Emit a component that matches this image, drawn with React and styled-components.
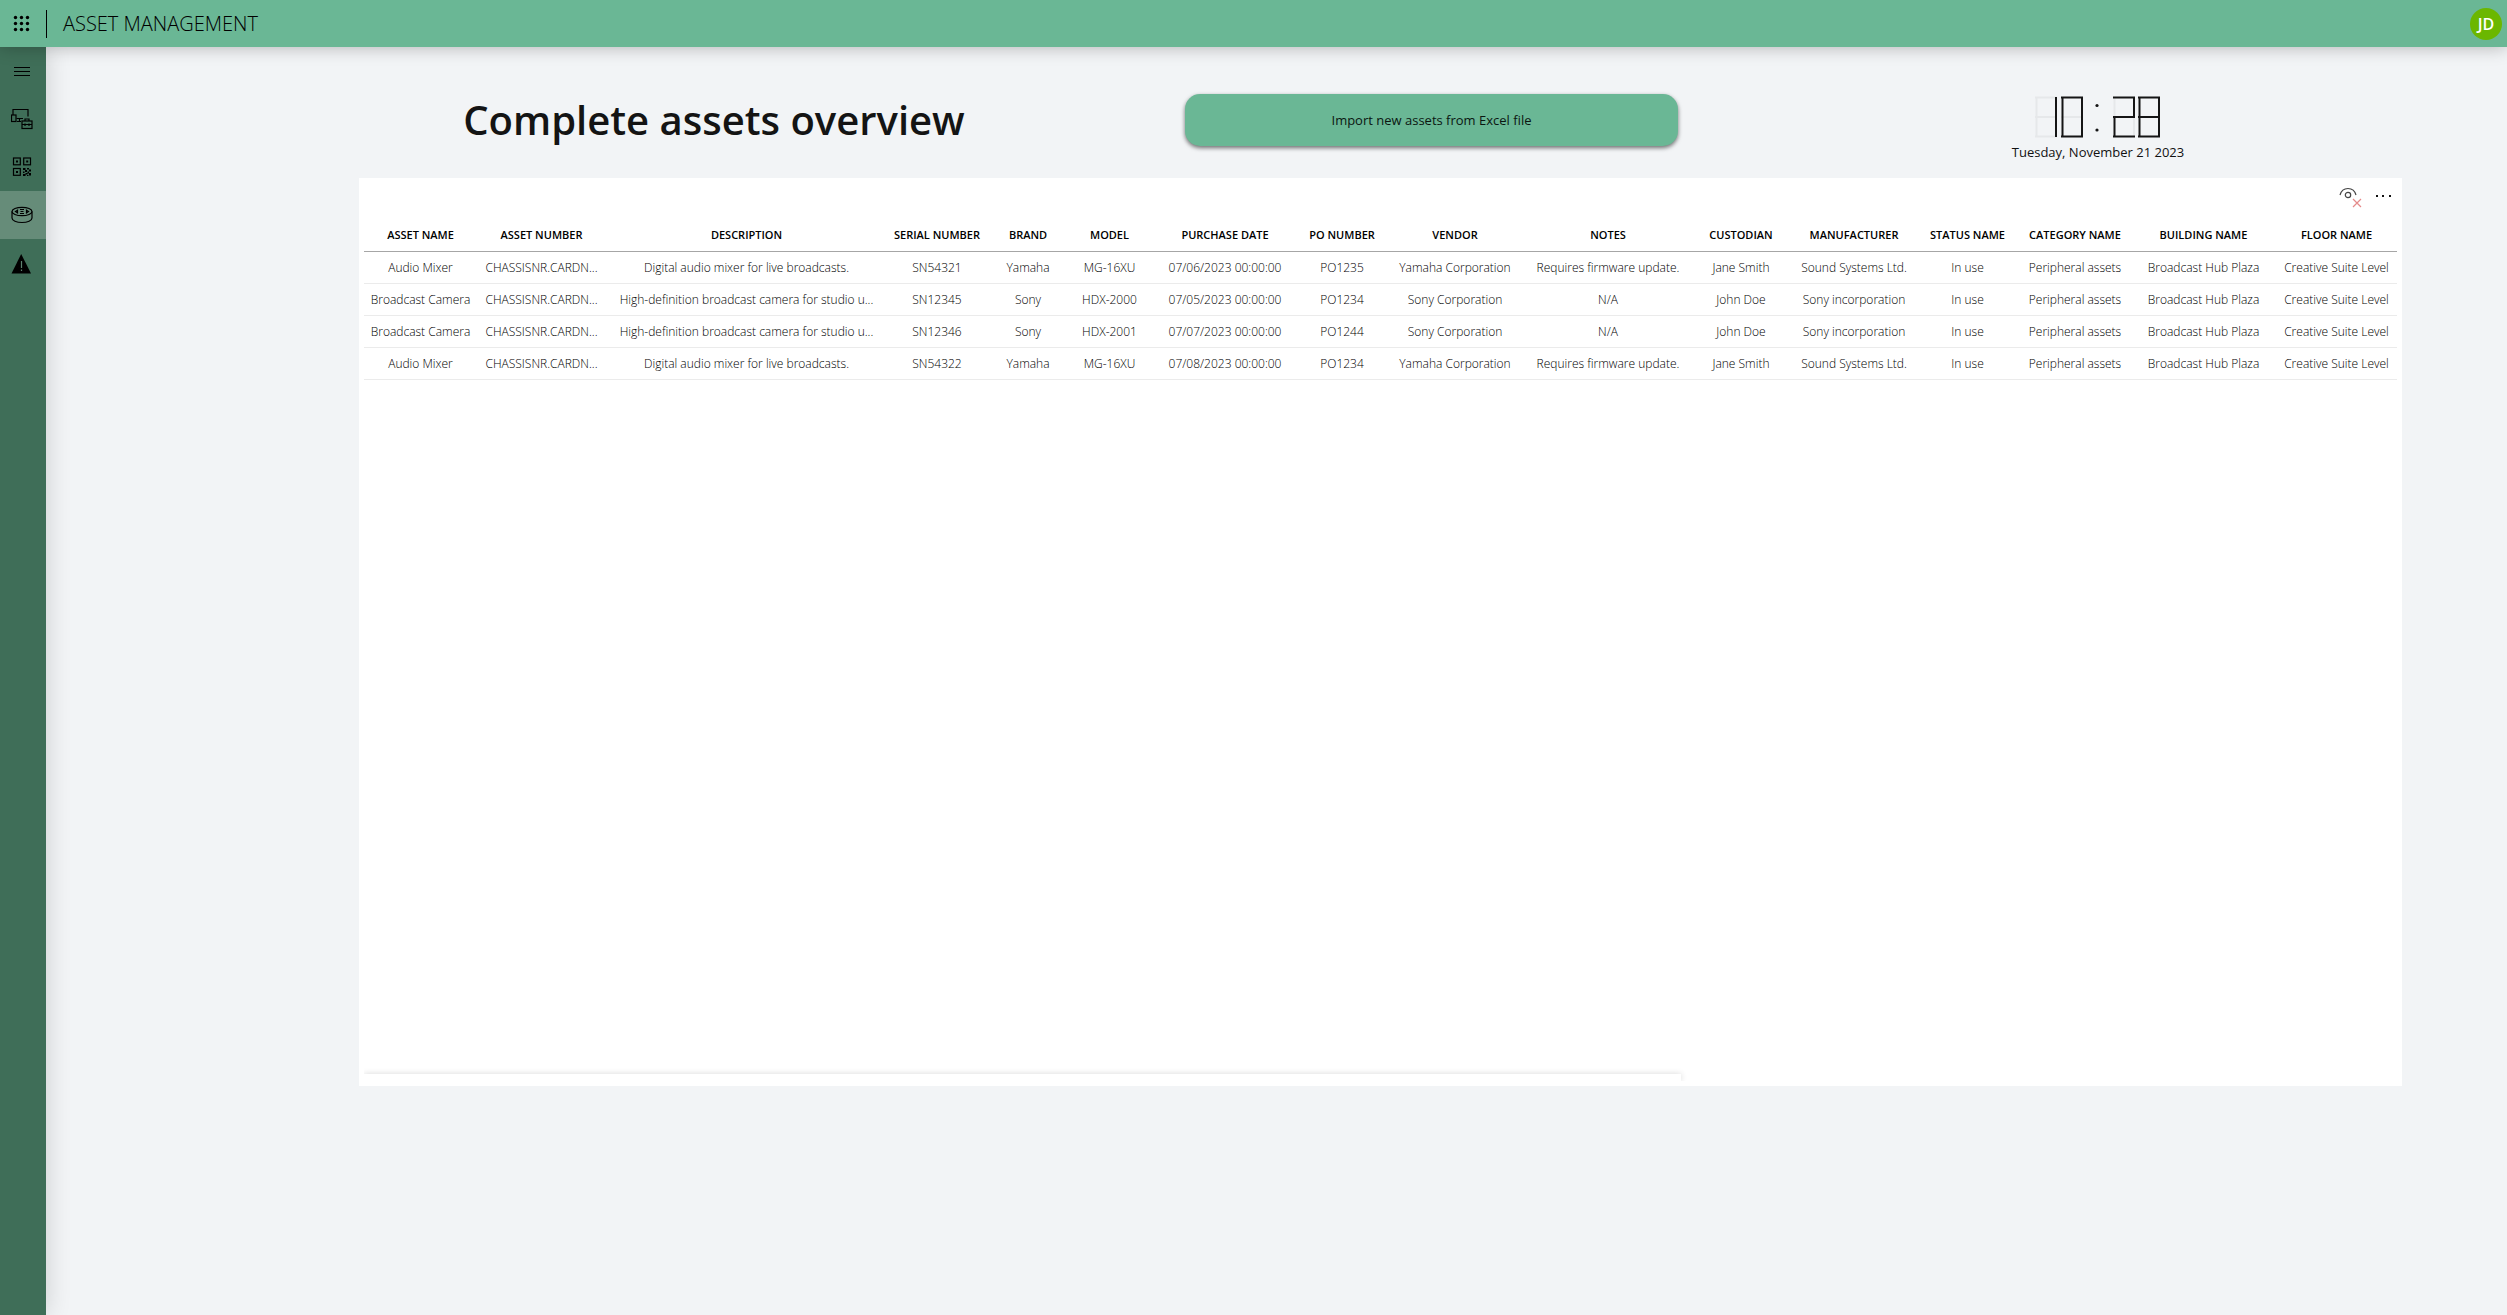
import React from "react";
import styled, { createGlobalStyle } from "styled-components";

const GlobalStyle = createGlobalStyle`
  *, *::before, *::after { box-sizing: border-box; }
  body {
    margin: 0;
    background: #f2f4f6;
    color: #111;
    font-family: "Open Sans", "Noto Sans", sans-serif;
  }
  button { font: inherit; color: inherit; border: 0; padding: 0; background: none; cursor: pointer; }
  svg { display: block; }
`;

const Page = styled.div`
  display: flex;
  flex-direction: column;
  min-height: 100vh;
`;

const TopBar = styled.header`
  position: relative;
  z-index: 2;
  display: flex;
  align-items: center;
  height: 47px;
  padding-right: 5px;
  background: #6ab795;
  box-shadow: 0 0 18px rgba(0, 0, 0, 0.28);
`;

const Launcher = styled.button`
  display: flex;
  align-items: center;
  width: 46px;
  height: 46px;
  && { padding-left: 13px; }
`;

const AppTitle = styled.div`
  flex: 1;
  display: flex;
  align-items: center;
  height: 28px;
  padding-left: 16px;
  border-left: 1px solid #000;
  font-size: 20px;
  font-weight: 300;
  color: #000;
`;

const Avatar = styled.button`
  width: 32px;
  height: 32px;
  border-radius: 50%;
  && {
    background: #6bb700;
    color: #fff;
    font-size: 16px;
    font-weight: 600;
  }
`;

const Body = styled.div`
  flex: 1;
  display: flex;
`;

const SideBar = styled.nav`
  position: relative;
  z-index: 1;
  flex: none;
  width: 46px;
  background: #3f6e58;
  box-shadow: 0 0 26px rgba(0, 0, 0, 0.16);
`;

const NavButton = styled.button`
  display: flex;
  align-items: center;
  width: 100%;
  height: 48px;
  && {
    padding-left: 11px;
    background: ${(p) => (p.$active ? "#668c79" : "transparent")};
  }
`;

const Main = styled.main`
  flex: 1;
  min-width: 0;
  display: flex;
  flex-direction: column;
  padding: 0 105px 229px 313px;
`;

const Banner = styled.div`
  display: grid;
  grid-template-columns: 710fr 725fr 608fr;
  align-items: center;
  justify-items: center;
  height: 131px;
  padding-top: 14px;
`;

const Heading = styled.h1`
  margin: 0;
  font-size: 40px;
  line-height: 56px;
  font-weight: 600;
  color: #141414;
  white-space: nowrap;
`;

const ImportButton = styled.button`
  width: 68%;
  height: 52px;
  border-radius: 15px;
  box-shadow: 0 2px 4px rgba(0, 0, 0, 0.55);
  && {
    background: #6ab795;
    color: #0b1611;
    font-size: 13px;
  }
`;

const Clock = styled.time`
  align-self: end;
  display: flex;
  flex-direction: column;
  align-items: center;
  gap: 4px;
  padding-bottom: 16px;
  font-size: 13px;
  line-height: 20px;
`;

const Card = styled.section`
  flex: 1;
  display: flex;
  flex-direction: column;
  padding: 0 5px 5px;
  background: #fff;
`;

const CardTools = styled.div`
  display: flex;
  justify-content: flex-end;
  gap: 5px;
  height: 40px;
  padding: 4px 0;
`;

const ToolButton = styled.button`
  display: grid;
  place-items: center;
  width: 28px;
  height: 28px;
`;

const Table = styled.table`
  width: 100%;
  table-layout: fixed;
  border-collapse: collapse;
  font-size: 12px;
  line-height: 16px;
  text-align: center;
  white-space: nowrap;
`;

const HeadCell = styled.th`
  height: 33px;
  padding: 2px 0 0;
  border-bottom: 1px solid #a6a6a6;
  font-size: 11px;
  font-weight: 600;
  color: #000;
`;

const Cell = styled.td`
  height: 32px;
  padding: 2px 0 0;
  border-bottom: 1px solid #ebebeb;
  font-weight: 300;
  color: #000;
`;

const ScrollTrack = styled.div`
  margin-top: auto;
  padding-top: 6px;
  overflow: hidden;
`;

const ScrollEdge = styled.div`
  width: 64.8%;
  height: 7px;
  background: #fff;
  box-shadow: 0 0 6px rgba(0, 0, 0, 0.16);
`;

const columns = [
  ["ASSET NAME", 113],
  ["ASSET NUMBER", 129],
  ["DESCRIPTION", 281],
  ["SERIAL NUMBER", 100],
  ["BRAND", 82],
  ["MODEL", 81],
  ["PURCHASE DATE", 150],
  ["PO NUMBER", 84],
  ["VENDOR", 142],
  ["NOTES", 164],
  ["CUSTODIAN", 102],
  ["MANUFACTURER", 124],
  ["STATUS NAME", 103],
  ["CATEGORY NAME", 112],
  ["BUILDING NAME", 145],
  ["FLOOR NAME", 121],
];

const mixer = "Digital audio mixer for live broadcasts.";
const camera = "High-definition broadcast camera for studio u...";
const place = ["In use", "Peripheral assets", "Broadcast Hub Plaza", "Creative Suite Level"];

const rows = [
  ["Audio Mixer", "CHASSISNR.CARDN...", mixer, "SN54321", "Yamaha", "MG-16XU", "07/06/2023 00:00:00", "PO1235", "Yamaha Corporation", "Requires firmware update.", "Jane Smith", "Sound Systems Ltd.", ...place],
  ["Broadcast Camera", "CHASSISNR.CARDN...", camera, "SN12345", "Sony", "HDX-2000", "07/05/2023 00:00:00", "PO1234", "Sony Corporation", "N/A", "John Doe", "Sony incorporation", ...place],
  ["Broadcast Camera", "CHASSISNR.CARDN...", camera, "SN12346", "Sony", "HDX-2001", "07/07/2023 00:00:00", "PO1244", "Sony Corporation", "N/A", "John Doe", "Sony incorporation", ...place],
  ["Audio Mixer", "CHASSISNR.CARDN...", mixer, "SN54322", "Yamaha", "MG-16XU", "07/08/2023 00:00:00", "PO1234", "Yamaha Corporation", "Requires firmware update.", "Jane Smith", "Sound Systems Ltd.", ...place],
];

const LauncherIcon = () => (
  <svg width="18" height="18" viewBox="0 0 18 18" aria-hidden="true">
    {[2.5, 8.5, 14.5].map((y) => [2.5, 8.5, 14.5].map((x) => <circle key={`${x}-${y}`} cx={x} cy={y} r="1.7" />))}
  </svg>
);

const MenuIcon = () => (
  <svg width="22" height="22" viewBox="0 0 22 22" stroke="#000" aria-hidden="true">
    <path d="M3 7.5h16M3 11.5h16M3 15.5h16" />
  </svg>
);

const DevicesIcon = () => (
  <svg width="22" height="22" viewBox="0 0 22 22" fill="none" stroke="#000" strokeWidth="1.200" aria-hidden="true">
    <path d="M2 7V1.500H17V8.500M5.500 10.500H12M8.500 10.500v3M6 13.500h4" />
    <rect x="0.500" y="7" width="4.500" height="6.500" />
    <rect x="11" y="13" width="10" height="7.500" />
    <path d="M14 13v-2h4v2M11 16.500h10M14 15.500v2.500M18 15.500v2.500" />
  </svg>
);

const QrIcon = () => (
  <svg width="22" height="22" viewBox="0 0 22 22" aria-hidden="true">
    <g fill="none" stroke="#000" strokeWidth="1.200">
      <rect x="2.500" y="2" width="6.800" height="6.800" />
      <rect x="12.700" y="2" width="6.800" height="6.800" />
      <rect x="2.500" y="12.500" width="6.800" height="6.800" />
    </g>
    <path d="M5 4.500h2v2H5zM15.200 4.500h2v2h-2zM5 15h2v2H5z" />
    <path d="M12 12h2.500v2H12zM16 12h2v1.500h-2zM18 13.500h2v2h-2zM14 14h2v2h-2zM16.500 15.500h1.500v2h-1.500zM12 15.500h1.500v1.500H12zM14.500 17h2v1.500h-2zM18 17h2v2.500h-2zM12 18h2.500v2H12zM16 19h1.500v1H16z" />
  </svg>
);

const PuckIcon = () => (
  <svg width="22" height="22" viewBox="0 0 22 22" fill="none" stroke="#000" strokeWidth="1.200" aria-hidden="true">
    <ellipse cx="11" cy="7.500" rx="10" ry="4.200" />
    <path d="M1 7.500v6.500c0 2.500 4.500 4.500 10 4.500s10-2 10-4.500V7.500" />
    <path d="M9 5.500h4M9 9.500h4M6.500 6.200L4.500 7.500l2 1.300zM15.500 6.200l2 1.300-2 1.300zM9.500 7.500h3" />
  </svg>
);

const WarningIcon = () => (
  <svg width="22" height="22" viewBox="0 0 22 22" aria-hidden="true">
    <path d="M10.200 2L20 21.500H0.500z" />
    <path d="M10.500 9v7M10.500 17.500v1.500" stroke="#5d8270" strokeWidth="1.200" />
  </svg>
);

const EyeOffIcon = () => (
  <svg width="24" height="24" viewBox="0 0 24 24" fill="none" aria-hidden="true">
    <path d="M2 11C3.200 6.500 6.200 4.500 10 4.500S16.800 6.500 18 11" stroke="#444" strokeWidth="1.200" />
    <circle cx="10" cy="11" r="2.700" stroke="#444" strokeWidth="1.200" />
    <path d="M15 15l8 8M23 15l-8 8" stroke="#e58a8a" strokeWidth="1.200" />
  </svg>
);

const MoreIcon = () => (
  <svg width="16" height="16" viewBox="0 0 16 16" fill="#111" aria-hidden="true">
    <path d="M1 7h2v2h-2zM7 7h2v2H7zM14 7h2v2h-2z" />
  </svg>
);

const segments = {
  a: "M0 1.500H22",
  b: "M21 1V21",
  c: "M21 21V41",
  d: "M0 40.500H22",
  e: "M1.500 21V41",
  f: "M1.500 1V21",
  g: "M0 21H22",
};

const digits = [
  { x: 0, on: "bc" },
  { x: 26, on: "abcdef" },
  { x: 78, on: "abged" },
  { x: 103, on: "abcdefg" },
];

const SevenSegment = () => (
  <svg width="126" height="42" viewBox="0 0 126 42" fill="none" role="img" aria-label="10:28">
    {digits.map(({ x, on }) => (
      <g key={x} transform={`translate(${x} 0)`} strokeWidth="2">
        {Object.entries(segments).filter(([k]) => !on.includes(k)).map(([k, d]) => (
          <path key={k} d={d} stroke="#e6e8ea" />
        ))}
        {Object.entries(segments).filter(([k]) => on.includes(k)).map(([k, d]) => (
          <path key={k} d={d} stroke="#151515" />
        ))}
      </g>
    ))}
    <circle cx="62" cy="9.500" r="1.600" fill="#151515" />
    <circle cx="62" cy="34" r="1.600" fill="#151515" />
  </svg>
);

const navItems = [
  { label: "Menu", Icon: MenuIcon },
  { label: "Equipment", Icon: DevicesIcon },
  { label: "QR codes", Icon: QrIcon },
  { label: "Assets", Icon: PuckIcon, active: true },
  { label: "Warnings", Icon: WarningIcon },
];

export default function App() {
  return (
    <Page>
      <GlobalStyle />
      <TopBar>
        <Launcher aria-label="App launcher"><LauncherIcon /></Launcher>
        <AppTitle>ASSET MANAGEMENT</AppTitle>
        <Avatar>JD</Avatar>
      </TopBar>
      <Body>
        <SideBar>
          {navItems.map(({ label, Icon, active }) => (
            <NavButton key={label} aria-label={label} $active={active}><Icon /></NavButton>
          ))}
        </SideBar>
        <Main>
          <Banner>
            <Heading>Complete assets overview</Heading>
            <ImportButton>Import new assets from Excel file</ImportButton>
            <Clock dateTime="2023-11-21T10:28">
              <SevenSegment />
              <span>Tuesday, November 21 2023</span>
            </Clock>
          </Banner>
          <Card>
            <CardTools>
              <ToolButton aria-label="Hide"><EyeOffIcon /></ToolButton>
              <ToolButton aria-label="More options"><MoreIcon /></ToolButton>
            </CardTools>
            <Table>
              <colgroup>
                {columns.map(([name, width]) => <col key={name} style={{ width }} />)}
              </colgroup>
              <thead>
                <tr>{columns.map(([name]) => <HeadCell key={name} scope="col">{name}</HeadCell>)}</tr>
              </thead>
              <tbody>
                {rows.map((row, r) => (
                  <tr key={r}>{row.map((value, c) => <Cell key={c}>{value}</Cell>)}</tr>
                ))}
              </tbody>
            </Table>
            <ScrollTrack><ScrollEdge /></ScrollTrack>
          </Card>
        </Main>
      </Body>
    </Page>
  );
}
